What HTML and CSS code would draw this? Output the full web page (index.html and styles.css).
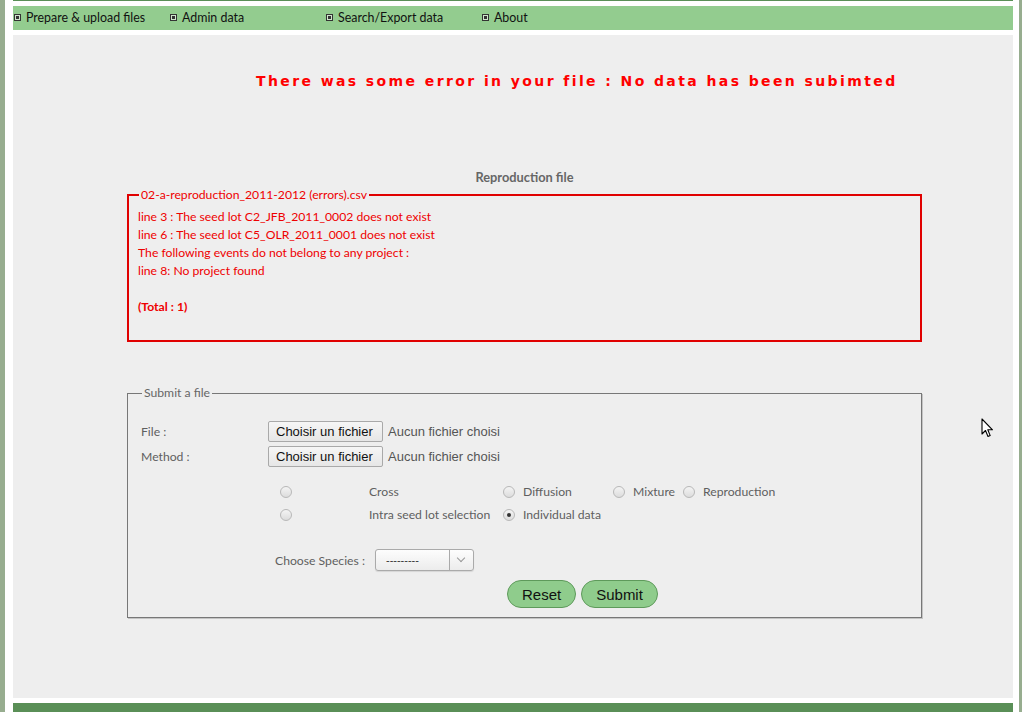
FILE: index.html
```html
<!DOCTYPE html>
<html lang="fr">
<head>
    <meta charset="UTF-8">
    <title>Upload files</title>
    <link rel="stylesheet" href="styles.css">
</head>
<body>
    <div class="page">
        <div class="topline"></div>
        <ul class="menu">
            <li><span class="bullet"></span>Prepare &amp; upload files</li>
            <li><span class="bullet"></span>Admin data</li>
            <li><span class="bullet"></span>Search/Export data</li>
            <li><span class="bullet"></span>About</li>
        </ul>

        <div class="content">
            <h2 class="error-title">There was some error in your file : No data has been subimted</h2>

            <div class="file-title">Reproduction file</div>
            <fieldset class="errors">
                <legend>02-a-reproduction_2011-2012 (errors).csv</legend>
                <div>line 3 : The seed lot C2_JFB_2011_0002 does not exist</div>
                <div>line 6 : The seed lot C5_OLR_2011_0001 does not exist</div>
                <div>The following events do not belong to any project :</div>
                <div>line 8: No project found</div>
                <div>&nbsp;</div>
                <div class="total">(Total : 1)</div>
            </fieldset>

            <fieldset class="submit-box">
                <legend>Submit a file</legend>
                <div class="file-row">
                    <label>File :</label>
                    <div class="file-input"><span class="file-btn">Choisir un fichier</span><span class="file-none">Aucun fichier choisi</span></div>
                </div>
                <div class="file-row">
                    <label>Method :</label>
                    <div class="file-input"><span class="file-btn">Choisir un fichier</span><span class="file-none">Aucun fichier choisi</span></div>
                </div>

                <div class="methods">
                    <span class="radio"></span>
                    <span>Cross</span>
                    <span><span class="radio"></span>Diffusion</span>
                    <span><span class="radio"></span>Mixture</span>
                    <span><span class="radio"></span>Reproduction</span>

                    <span class="radio"></span>
                    <span>Intra seed lot selection</span>
                    <span><span class="radio checked"></span>Individual data</span>
                </div>

                <div class="species">
                    <label>Choose Species :</label>
                    <div class="select"><span class="select-value">---------</span><span class="select-arrow"></span></div>
                </div>

                <div class="actions">
                    <button class="green-btn">Reset</button>
                    <button class="green-btn">Submit</button>
                </div>
            </fieldset>
        </div>

        <div class="footer"></div>
    </div>

    <!-- pointeur de la souris -->
    <svg class="cursor" width="13" height="21" viewBox="0 0 13 21">
        <path d="M1 1 L1 16 L4.5 12.5 L7 18.5 L9.2 17.6 L6.8 11.8 L11.5 11.8 Z" fill="#fff" stroke="#000" stroke-width="1.1" stroke-linejoin="round"/>
    </svg>
</body>
</html>
```

FILE: styles.css
```css
html, body {
    margin: 0;
    padding: 0;
    background: #fff;
}

body {
    font-family: 'Lato', 'Noto Sans', sans-serif;
    font-size: 12.2px;
    border-left: 5px solid #97ad8f;
    border-right: 3px solid #97ad8f;
    height: 712px;
    box-sizing: border-box;
    overflow: hidden;
}

.page {
    margin: 0 6px 0 8px;
    display: flex;
    flex-direction: column;
    height: 712px;
}

.topline {
    height: 1px;
    background: #5a8f57;
}

.menu {
    list-style: none;
    margin: 5px 0 0 0;
    padding: 0 0 2px 0;
    height: 24px;
    box-sizing: border-box;
    background: #93cc8f;
    display: flex;
    align-items: center;
}

.menu li {
    width: 156px;
    display: flex;
    align-items: center;
    color: #111;
    font-size: 12.4px;
}

.bullet {
    width: 5px;
    height: 5px;
    margin: 0 5px 0 1px;
    border: 1px solid #333;
    background: #333;
    box-shadow: inset 0 0 0 1px #cfe6cc;
}

.content {
    margin-top: 5px;
    background: #eeeeee;
    flex: 1;
    padding-top: 37px;
}

.error-title {
    margin: 0 0 0 243px;
    font-family: 'DejaVu Sans', Verdana, sans-serif;
    font-size: 14px;
    font-weight: bold;
    letter-spacing: 2.4px;
    color: #ff0000;
    line-height: 18px;
}

.file-title {
    margin: 80px 0 0 0;
    padding-left: 23px;
    text-align: center;
    font-weight: bold;
    font-size: 12.8px;
    color: #666;
    line-height: 14px;
}

fieldset {
    margin: 0 0 0 114px;
    width: 795px;
    box-sizing: border-box;
    min-width: 0;
}

legend {
    padding: 0 2px;
    margin-left: 1px;
    line-height: 14px;
}

.errors {
    margin-top: 4px;
    border: 2px solid #e00000;
    padding: 6px 9px 24px;
    color: #ee0000;
    line-height: 18px;
}

.errors legend {
    color: #ee0000;
}

.total {
    font-weight: bold;
}

.submit-box {
    margin-top: 44px;
    border: 1px solid #777;
    box-shadow: 1px 1px 0 #c4c4c4;
    padding: 19px 13px 9px;
    color: #5f5f5f;
}

.submit-box legend {
    color: #666;
}

.file-row {
    display: grid;
    grid-template-columns: 127px auto;
    align-items: center;
    height: 25px;
}

.file-input {
    display: flex;
    align-items: center;
    font-family: 'Liberation Sans', Arial, sans-serif;
    font-size: 13px;
}

.file-btn {
    height: 21px;
    box-sizing: border-box;
    padding: 0 7px;
    border: 1px solid #a9a9a9;
    border-radius: 2px;
    background: linear-gradient(#f6f6f6, #e6e6e6);
    color: #111;
    display: flex;
    align-items: center;
    width: 115px;
}

.file-none {
    margin-left: 5px;
    color: #555;
}

.methods {
    margin: 11px 0 0 139px;
    display: grid;
    grid-template-columns: 89px 134px 110px 70px auto;
    grid-auto-rows: 23px;
    align-items: center;
}

.methods > span {
    display: flex;
    align-items: center;
}

.radio {
    width: 12px;
    height: 12px;
    box-sizing: border-box;
    border: 1px solid #b8b8b8;
    border-radius: 50%;
    background: linear-gradient(#f4f4f4, #dcdcdc);
    margin-right: 8px;
    display: inline-block;
    position: relative;
}

.radio.checked::after {
    content: '';
    position: absolute;
    left: 3px;
    top: 3px;
    width: 4px;
    height: 4px;
    border-radius: 50%;
    background: #333;
}

.species {
    margin: 23px 0 0 134px;
    display: flex;
    align-items: center;
}

.species label {
    margin-right: 10px;
}

.select {
    width: 99px;
    height: 22px;
    box-sizing: border-box;
    border: 1px solid #aaa;
    border-radius: 3px;
    background: linear-gradient(#fdfdfd, #ececec);
    display: flex;
    align-items: center;
    box-shadow: 0 1px 1px rgba(0,0,0,0.1);
}

.select-value {
    flex: 1;
    padding-left: 10px;
    color: #333;
    font-family: 'Liberation Sans', Arial, sans-serif;
    font-size: 11px;
}

.select-arrow {
    width: 23px;
    height: 20px;
    border-left: 1px solid #aaa;
    position: relative;
}

.select-arrow::after {
    content: '';
    position: absolute;
    left: 8px;
    top: 5px;
    width: 5px;
    height: 5px;
    border-right: 1px solid #999;
    border-bottom: 1px solid #999;
    transform: rotate(45deg);
}

.actions {
    margin: 9px 0 0 366px;
    display: flex;
    gap: 5px;
}

.green-btn {
    height: 28px;
    padding: 0 14px;
    font-family: 'Liberation Sans', Arial, sans-serif;
    font-size: 15px;
    color: #111;
    background: #8fcc8c;
    border: 1px solid #5e9a5b;
    border-radius: 14px;
}

.footer {
    margin-top: 5px;
    height: 9px;
    background: #5a8f57;
}

.cursor {
    position: absolute;
    left: 981px;
    top: 418px;
}
```
